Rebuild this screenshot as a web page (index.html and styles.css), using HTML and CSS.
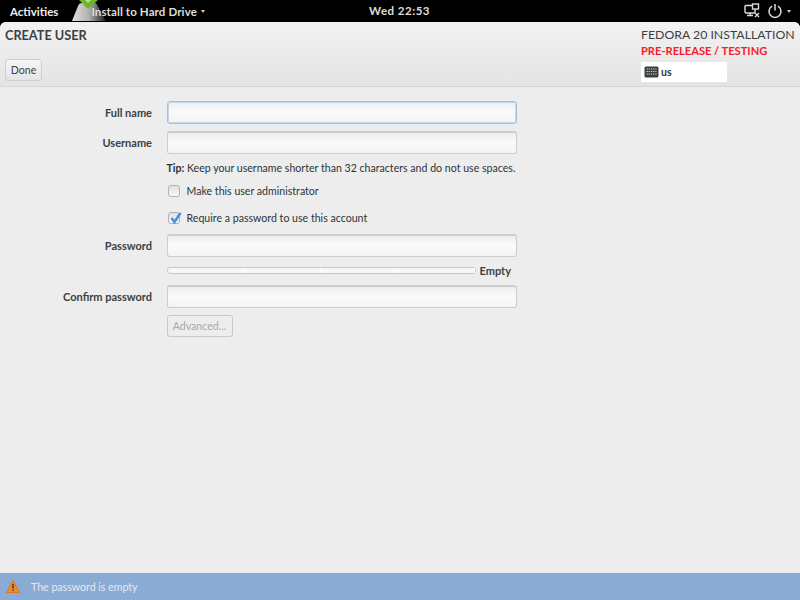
FILE: index.html
```html
<!DOCTYPE html>
<html lang="en">

<head>
    <meta charset="UTF-8">
    <title>Create User - Fedora 20 Installation</title>
    <link rel="stylesheet" href="styles.css">
</head>

<body>
    <div class="topbar">
        <div class="topbar-left">
            <span class="activities">Activities</span>
            <span class="app-menu">
                <svg class="app-icon" width="36" height="22" viewBox="0 0 36 22">
                    <defs>
                        <linearGradient id="disk" x1="0" y1="0" x2="1" y2="0">
                            <stop offset="0" stop-color="#e0e0e0"/>
                            <stop offset="0.5" stop-color="#b0b0b0"/>
                            <stop offset="1" stop-color="#1a1a1a"/>
                        </linearGradient>
                    </defs>
                    <path d="M0 21 L6 6 Q7 3 10 3 L24 3 L34 21 Z" fill="url(#disk)"/>
                    <path d="M7 0 L26 0 L16 9 Z" fill="#6db52c"/>
                    <path d="M13 0 L19 0 L16 3 Z" fill="#b5e38a"/>
                </svg>
                <span class="app-name">Install to Hard Drive</span>
                <span class="arrow"></span>
            </span>
        </div>
        <span class="clock">Wed 22:53</span>
        <div class="topbar-right">
            <svg width="16" height="16" viewBox="0 0 16 16" fill="none" stroke="#ddd" stroke-width="1.4">
                <rect x="1" y="2.5" width="10" height="7.5" rx="1"/>
                <path d="M3 12.5 H9 M6 10 V12.5"/>
                <rect x="8.5" y="1" width="6" height="5" fill="#000"/>
                <path d="M11 10 L15 14 M15 10 L11 14" stroke-width="1.3"/>
            </svg>
            <svg class="power" width="16" height="16" viewBox="0 0 16 16" fill="none" stroke="#ddd" stroke-width="1.5">
                <path d="M5 3.2 A6 6 0 1 0 11 3.2"/>
                <path d="M8 1 V7.5"/>
            </svg>
            <span class="arrow"></span>
        </div>
    </div>

    <div class="window">
        <header class="header">
            <div class="header-left">
                <h1>CREATE USER</h1>
                <button class="btn done">Done</button>
            </div>
            <div class="header-right">
                <div class="product">FEDORA 20 INSTALLATION</div>
                <div class="prerelease">PRE-RELEASE / TESTING</div>
                <div class="layout">
                    <svg width="15" height="12" viewBox="0 0 15 12">
                        <rect x="0.5" y="0.5" width="14" height="11" rx="1.5" fill="#3a3f40"/>
                        <path d="M2.5 3 H12.5 M2.5 5.5 H12.5 M2.5 8 H12.5" stroke="#c8c8c8" stroke-width="1" stroke-dasharray="1.4 0.8"/>
                    </svg>
                    <span>us</span>
                </div>
            </div>
        </header>

        <main class="content">
            <form class="user-form">
                <label class="field-label">Full name</label>
                <div class="entry focused"></div>

                <label class="field-label">Username</label>
                <div class="entry"></div>

                <p class="tip"><strong>Tip:</strong> Keep your username shorter than 32 characters and do not use spaces.</p>

                <div class="check check-admin">
                    <span class="box"></span>
                    <span>Make this user administrator</span>
                </div>

                <div class="check check-require">
                    <span class="box">
                        <svg width="13" height="13" viewBox="0 0 13 13">
                            <path d="M2.5 6 L5.5 10 L11.5 1" fill="none" stroke="#4a90d9" stroke-width="2.6"/>
                        </svg>
                    </span>
                    <span>Require a password to use this account</span>
                </div>

                <label class="field-label">Password</label>
                <div class="entry"></div>

                <div class="strength">
                    <div class="strength-bar">
                        <span></span><span></span><span></span><span></span>
                    </div>
                    <span class="strength-text">Empty</span>
                </div>

                <label class="field-label">Confirm password</label>
                <div class="entry"></div>

                <div class="advanced">
                    <button type="button" class="btn disabled">Advanced...</button>
                </div>
            </form>
        </main>

        <footer class="status">
            <svg width="14" height="13" viewBox="0 0 14 13">
                <path d="M7 0.5 L13.5 12.5 H0.5 Z" fill="#ef8a2a" stroke="#e2761e" stroke-linejoin="round"/>
                <path d="M7 4 V8.5 M7 9.7 V11" stroke="#5a4020" stroke-width="1.6"/>
            </svg>
            <span>The password is empty</span>
        </footer>
    </div>
</body>

</html>
```

FILE: styles.css
```css
html,
body {
    margin: 0;
    padding: 0;
}

body {
    width: 800px;
    height: 600px;
    display: flex;
    flex-direction: column;
    overflow: hidden;
    background-color: black;
    font-family: Lato, "Open Sans", sans-serif;
    font-size: 10.6px;
    color: #2e3436;
}

.topbar {
    height: 22px;
    flex: none;
    position: relative;
    display: flex;
    justify-content: space-between;
    align-items: center;
    color: #dcdcdc;
    font-size: 11.5px;
    font-weight: 700;
}

.topbar-left {
    display: flex;
    align-items: center;
    height: 22px;
}

.activities {
    margin-left: 10px;
    color: #eee;
    font-weight: 700;
}

.app-menu {
    display: flex;
    align-items: center;
    margin-left: 14px;
}

.app-icon {
    display: block;
}

.app-name {
    margin-left: -17px;
    position: relative;
    letter-spacing: 0.12px;
}

.arrow {
    display: inline-block;
    margin-left: 4px;
    border-left: 2.5px solid transparent;
    border-right: 2.5px solid transparent;
    border-top: 3px solid #ccc;
}

.clock {
    position: absolute;
    left: 369px;
    top: 4px;
    letter-spacing: 0.5px;
}

.topbar-right {
    display: flex;
    align-items: center;
    padding-right: 9px;
}

.power {
    margin-left: 7px;
}

.topbar-right .arrow {
    margin-left: 4px;
}

.window {
    flex: 1;
    display: flex;
    flex-direction: column;
    min-height: 0;
    background-color: #ededed;
    border-radius: 6px 6px 0 0;
    overflow: hidden;
}

.header {
    height: 65px;
    flex: none;
    display: flex;
    justify-content: space-between;
    box-sizing: border-box;
    border-bottom: 1px solid #d5d5d5;
    background: linear-gradient(#f2f2f2, #e4e4e4);
}

.header-left {
    padding: 6px 0 0 5px;
}

h1 {
    margin: 0;
    font-size: 12.7px;
    line-height: 14px;
    font-weight: 700;
    color: #3b4143;
}

.btn {
    display: block;
    padding: 0;
    font-family: inherit;
    font-size: 10.6px;
    color: #3b4143;
    border: 1px solid #cfcfcf;
    border-radius: 3px;
    background: linear-gradient(#f6f6f6, #e4e4e4);
}

.done {
    margin-top: 17px;
    width: 37px;
    height: 22px;
}

.header-right {
    width: 159px;
    padding-top: 6px;
}

.product {
    font-size: 12.3px;
    line-height: 14px;
    color: #3b4143;
    white-space: nowrap;
}

.prerelease {
    margin-top: 2px;
    font-size: 11.1px;
    line-height: 14px;
    font-weight: 700;
    color: #f5202a;
    white-space: nowrap;
}

.layout {
    margin-top: 4px;
    width: 86px;
    height: 20px;
    display: flex;
    align-items: center;
    gap: 2px;
    padding-left: 3px;
    box-sizing: border-box;
    background-color: white;
    font-weight: 700;
}

.content {
    flex: 1;
    min-height: 0;
}

.user-form {
    display: grid;
    grid-template-columns: 152px 350px;
    column-gap: 14.5px;
    grid-auto-rows: min-content;
    padding-top: 14px;
}

.field-label {
    grid-column: 1;
    align-self: center;
    text-align: right;
    font-size: 11px;
    font-weight: 700;
    color: #3b4143;
    margin-bottom: 7px;
}

.entry {
    grid-column: 2;
    height: 23px;
    box-sizing: border-box;
    margin-bottom: 7px;
    border: 1px solid #cdcdcd;
    border-top-width: 2px;
    border-radius: 3px;
    background: linear-gradient(#ededed, #fafafa 45%, #f4f4f4);
}

.entry.focused {
    border: 1px solid #a4c0e0;
    box-shadow: 0 0 0 1px #c4d6ea inset;
}

.tip {
    grid-column: 2;
    margin: 0;
    height: 16px;
    line-height: 14px;
    white-space: nowrap;
}

.check {
    grid-column: 2;
    display: flex;
    align-items: center;
    gap: 7px;
    height: 14px;
    padding-left: 1px;
}

.check-admin {
    margin-top: 7px;
}

.check-require {
    margin-top: 13px;
    margin-bottom: 9px;
}

.box {
    width: 10px;
    height: 10px;
    flex: none;
    position: relative;
    border: 1px solid #b0b0b0;
    border-radius: 3px;
    background: linear-gradient(#e0e0e0, #fafafa);
}

.box svg {
    position: absolute;
    left: 0;
    top: -1px;
}

.strength {
    grid-column: 2;
    display: flex;
    align-items: center;
    margin-top: 2px;
    margin-bottom: 10px;
    height: 9px;
}

.strength-bar {
    width: 309px;
    height: 7px;
    flex: none;
    display: flex;
    box-sizing: border-box;
    border: 1px solid #c8c8c8;
    border-radius: 3px;
    background-color: #f7f7f7;
}

.strength-bar span {
    flex: 1;
    border-right: 1px solid #fff;
}

.strength-text {
    margin-left: 4px;
    font-size: 11px;
    font-weight: 700;
    color: #3b4143;
}

.advanced {
    grid-column: 2;
}

.disabled {
    width: 66px;
    height: 22px;
    color: #a8a8a8;
    border-color: #c8c8c8;
    background: #ededed;
}

.status {
    height: 27px;
    flex: none;
    display: flex;
    align-items: center;
    padding-left: 6px;
    background-color: #8aabd4;
    color: #e4eaf2;
}

.status span {
    margin-left: 11px;
}
```
